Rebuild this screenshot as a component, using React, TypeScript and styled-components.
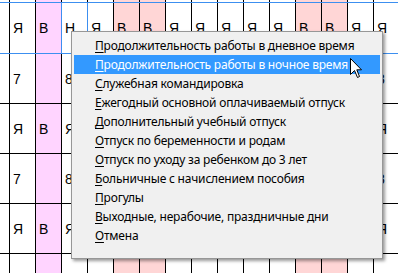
import React from "react";
import styled, { createGlobalStyle } from "styled-components";

const Global = createGlobalStyle`
  html, body { margin: 0; padding: 0; background: #fff; }
  body { width: 398px; height: 273px; overflow: hidden; }
`;

const Page = styled.div`
  position: relative;
  width: 398px;
  height: 273px;
  overflow: hidden;
  background: #fff;
`;

const Grid = styled.div`
  display: flex;
  flex-direction: column;
`;

const Row = styled.div<{ $h: number; $sel?: boolean }>`
  display: flex;
  height: ${(p) => p.$h}px;
  border-bottom: 1px solid ${(p) => (p.$sel ? "#3c8ff0" : "#000")};
  box-sizing: content-box;
`;

type Kind = "plain" | "magenta" | "salmon";

const bg: Record<Kind, string> = {
  plain: "#ffffff",
  magenta: "#ffd4ff",
  salmon: "#ffd6d6",
};

const Stub = styled.div`
  width: 9px;
  flex: none;
  border-right: 1px solid #000;
`;

const Cell = styled.div<{ $kind: Kind; $sel?: boolean }>`
  flex: none;
  display: flex;
  align-items: center;
  padding-left: 3px;
  box-sizing: content-box;
  width: 22px;
  border-right: 1px solid ${(p) => (p.$sel ? "#3c8ff0" : "#000")};
  background: ${(p) => bg[p.$kind]};
  box-shadow: ${(p) => (p.$sel ? "-1px 0 0 #3c8ff0" : "none")};
  font-family: "Liberation Sans", Arial, sans-serif;
  font-size: 14px;
  color: #000;
`;

const kinds: Kind[] = [
  "plain", "magenta", "plain", "plain", "salmon", "salmon", "plain", "plain",
  "plain", "plain", "plain", "salmon", "salmon", "plain", "plain",
];

/* cells 3..13 of the lower rows lie fully under the popup menu */
const yaRow = ["Я", "В", "Я", "", "", "", "", "", "", "", "", "", "", "", "Я"];
const hRow = ["7", "", "8", "", "", "", "", "", "", "", "", "", "", "", "8"];
const row1 = ["Я", "В", "Н", "Я", "В", "В", "Я", "Я", "Я", "Я", "Я", "В", "В", "Я", "Я"];
const empty = kinds.map(() => "");

const rows: { h: number; vals: string[]; sel?: boolean; selCol?: number }[] = [
  { h: 2, vals: empty, sel: true },
  { h: 50, vals: row1, sel: true, selCol: 2 },
  { h: 49, vals: hRow },
  { h: 49, vals: yaRow },
  { h: 49, vals: hRow },
  { h: 49, vals: yaRow },
  { h: 49, vals: empty },
];

const Menu = styled.div`
  position: absolute;
  left: 71px;
  top: 31px;
  width: 306px;
  height: 222px;
  border: 1px solid #979797;
  background: #f0f0f0;
  box-shadow: 2px 2px 3px rgba(0, 0, 0, 0.4);
  padding: 4px 2px 0 2px;
  box-sizing: content-box;
  display: flex;
  flex-direction: column;
`;

const Item = styled.div<{ $active?: boolean }>`
  height: 19px;
  flex: none;
  display: flex;
  align-items: center;
  padding-left: 21px;
  background: ${(p) => (p.$active ? "#3399ff" : "transparent")};
  color: ${(p) => (p.$active ? "#fff" : "#000")};
  font-family: "Noto Sans", "Open Sans", sans-serif;
  font-size: 12px;
  letter-spacing: -0.2px;
  white-space: nowrap;
`;

const Key = styled.span`
  text-decoration: underline;
  text-underline-offset: 2px;
`;

const Cursor = styled.svg`
  position: absolute;
  left: 350px;
  top: 58px;
  width: 13px;
  height: 21px;
`;

const items = [
  "Продолжительность работы в дневное время",
  "Продолжительность работы в ночное время",
  "Служебная командировка",
  "Ежегодный основной оплачиваемый отпуск",
  "Дополнительный учебный отпуск",
  "Отпуск по беременности и родам",
  "Отпуск по уходу за ребенком до 3 лет",
  "Больничные с начислением пособия",
  "Прогулы",
  "Выходные, нерабочие, праздничные дни",
  "Отмена",
];

export default function App() {
  return (
    <Page>
      <Global />
      <Grid>
        {rows.map((r, ri) => (
          <Row key={ri} $h={r.h} $sel={r.sel}>
            <Stub />
            {kinds.map((k, ci) => (
              <Cell key={ci} $kind={k} $sel={r.selCol === ci}>
                {r.vals[ci]}
              </Cell>
            ))}
          </Row>
        ))}
      </Grid>
      <Menu>
        {items.map((t, i) => (
          <Item key={i} $active={i === 1}>
            <Key>{t[0]}</Key>
            {t.slice(1)}
          </Item>
        ))}
      </Menu>
      <Cursor viewBox="0 0 13 21">
        <path
          d="M0.5 0.5 L0.5 16.5 L4.5 12.5 L7.5 19.5 L9.5 18.5 L6.8 11.8 L11.5 11.8 Z"
          fill="#fff"
          stroke="#000"
          strokeWidth="1"
          strokeLinejoin="miter"
        />
      </Cursor>
    </Page>
  );
}
